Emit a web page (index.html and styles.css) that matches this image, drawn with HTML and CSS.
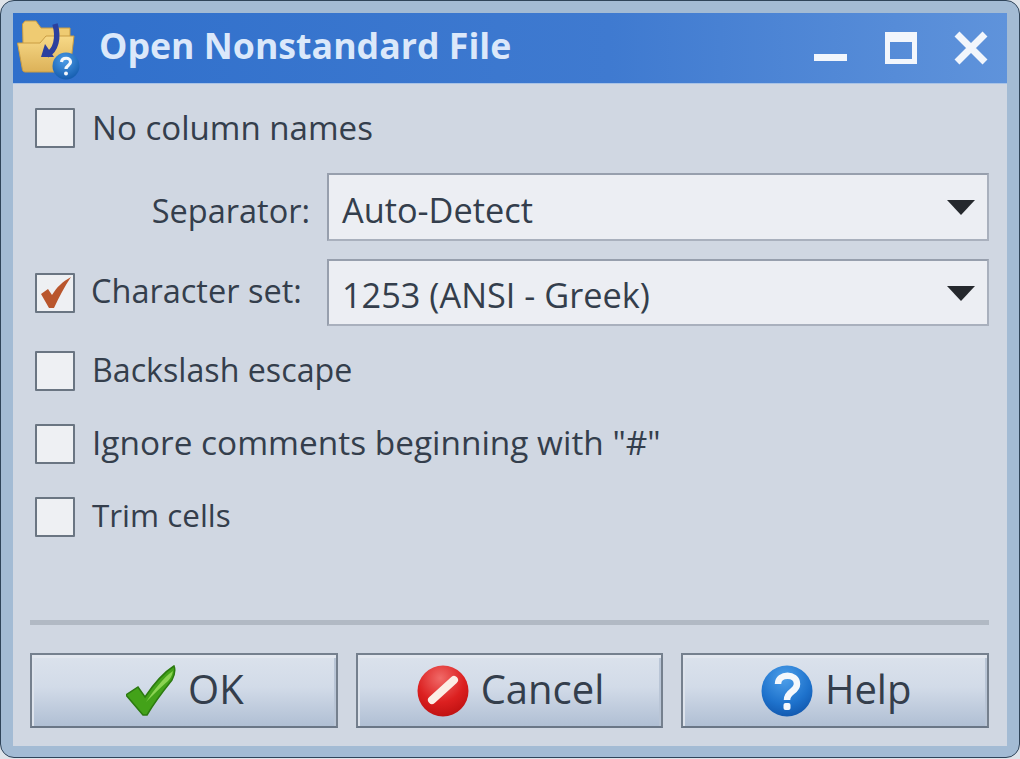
FILE: index.html
```html
<!DOCTYPE html>
<html lang="en">
<head>
<meta charset="utf-8">
<title>Open Nonstandard File</title>
<link rel="stylesheet" href="styles.css">
</head>
<body>
<div class="window">
  <header class="titlebar">
    <svg class="app-icon" width="68" height="68" viewBox="0 0 68 68">
      <defs>
        <linearGradient id="fold" x1="0" y1="0" x2="0" y2="1"><stop offset="0" stop-color="#f7d987"/><stop offset="1" stop-color="#dcb158"/></linearGradient>
        <radialGradient id="qsm" cx=".45" cy=".3" r=".8"><stop offset="0" stop-color="#4b9be6"/><stop offset="1" stop-color="#0f55a8"/></radialGradient>
      </defs>
      <path d="M5.500 8 L8 5 H19 L24 12 H53 V28 H6Z" fill="#efcb72" stroke="#c99c42"/>
      <path d="M0.500 27 H23 L29 20 H57 L53 54 Q52.500 56 50 56 H8 Q6 56 5.500 54Z" fill="url(#fold)" stroke="#c99c42"/>
      <path d="M38 8 C42 22 39 34 30 39" fill="none" stroke="#2b3f9e" stroke-width="5.500"/>
      <path d="M24 41 L28 28 L37 41Z" fill="#2b3f9e"/>
      <circle cx="49" cy="50" r="13.500" fill="url(#qsm)"/>
      <path d="M44.500 46 C45 41 53.500 41 53.500 46 C53.500 49.500 49 49.500 49 53" fill="none" stroke="#f5f8fc" stroke-width="3.200"/>
      <circle cx="49" cy="57.500" r="2" fill="#f5f8fc"/>
    </svg>
    <h1 class="title">Open Nonstandard File</h1>
    <div class="controls">
      <svg width="34" height="34" viewBox="0 0 34 34"><rect x="0" y="23" width="33" height="7" fill="#f2f6fc"/></svg>
      <svg width="34" height="34" viewBox="0 0 34 34"><path fill="#f2f6fc" fill-rule="evenodd" d="M1 1H33V33H1ZM6 11V28H28V11Z"/></svg>
      <svg width="34" height="34" viewBox="0 0 34 34"><path stroke="#f2f6fc" stroke-width="7" d="M3 3L31 31M31 3L3 31"/></svg>
    </div>
  </header>
  <main class="content">
    <div class="row row-first">
      <span class="check"></span><span class="label size-a">No column names</span>
    </div>
    <div class="row row-sep">
      <span class="field-label">Separator:</span>
      <div class="combo"><span>Auto-Detect</span><i class="arrow"></i></div>
    </div>
    <div class="row row-charset">
      <span class="check">
        <svg width="34" height="34" viewBox="0 0 34 34"><path d="M3 18 L10 13 L14 19 C19 11 24 6 33 1 C27 10 21 21 16 32 L11 32Z" fill="#b9562d"/></svg>
      </span>
      <span class="charset-label">Character set:</span>
      <div class="combo"><span>1253 (ANSI - Greek)</span><i class="arrow"></i></div>
    </div>
    <div class="row row-a"><span class="check"></span><span class="label size-b">Backslash escape</span></div>
    <div class="row row-b"><span class="check"></span><span class="label size-c">Ignore comments beginning with "#"</span></div>
    <div class="row row-c"><span class="check"></span><span class="label size-d">Trim cells</span></div>
    <div class="spacer"></div>
    <hr class="divider">
    <div class="buttons">
      <button class="btn" type="button">
        <svg width="50" height="52" viewBox="2 0 50 52"><path d="M2 30 L14 22 L21 32 C29 20 39 8 50 1 C52 6 50 11 48 15 C40 25 30 38 23 50 L19 50Z" fill="#43a219" stroke="#2c7a10" stroke-width="1.500"/><path d="M22 37 C30 25 39 13 49 6 C48 11 46 14 44 16 C36 23 29 30 22 37Z" fill="#8bd352"/></svg>
        <span>OK</span>
      </button>
      <button class="btn" type="button">
        <svg width="52" height="52" viewBox="0 0 52 52"><defs><radialGradient id="red" cx=".45" cy=".25" r=".85"><stop offset="0" stop-color="#f06a68"/><stop offset=".55" stop-color="#dc2020"/><stop offset="1" stop-color="#b70d0d"/></radialGradient></defs><circle cx="26" cy="26" r="25.500" fill="url(#red)"/><path d="M15 35 L37 15" stroke="#fbeee6" stroke-width="8" stroke-linecap="round"/></svg>
        <span>Cancel</span>
      </button>
      <button class="btn" type="button">
        <svg width="52" height="52" viewBox="0 0 52 52"><defs><radialGradient id="blue" cx=".45" cy=".25" r=".85"><stop offset="0" stop-color="#4ea0ea"/><stop offset=".6" stop-color="#1e72cc"/><stop offset="1" stop-color="#0e50a5"/></radialGradient></defs><circle cx="26" cy="26" r="25.500" fill="url(#blue)"/><path d="M17 19 C17 8 36 8 36 19 C36 27 26 26 26 35" fill="none" stroke="#f5f8fc" stroke-width="6.500"/><rect x="22.500" y="38" width="7" height="7" rx="2" fill="#f5f8fc"/></svg>
        <span>Help</span>
      </button>
    </div>
  </main>
</div>
</body>
</html>
```
FILE: styles.css
```css
* { box-sizing: border-box; }
html, body { margin: 0; padding: 0; height: 100%; background: #dfe4ea; }
body { font-family: "Open Sans", "Noto Sans", sans-serif; color: #343e4c; overflow: hidden; }
.window {
  width: 1020px; height: 758px;
  padding: 12px 12px 11px 12px;
  display: flex; flex-direction: column;
  background: #a3bbd4;
  border: 1.5px solid #2f4459;
  border-radius: 14px;
}
.titlebar {
  flex: none; height: 71px;
  display: flex; align-items: center;
  background: linear-gradient(90deg, #2f6fcb 0%, #3f7ad0 60%, #5f93db 100%);
  border-bottom: 1px solid #a9c3e6;
  position: relative;
}
.app-icon { position: absolute; left: 4px; top: 3px; }
.title {
  margin: 0 0 4px 86px;
  font-size: 35.700px; font-weight: 700; color: #dbe8fa; line-height: 1;
  white-space: nowrap;
}
.controls { margin-left: auto; margin-right: 19px; display: flex; align-items: center; gap: 36px; }
.content {
  flex: 1; display: flex; flex-direction: column;
  padding: 24px 18px 18px 17px;
  background: #d0d7e2;
}
.row { display: flex; align-items: center; font-size: 32.500px; white-space: nowrap; }
.row-first { padding-left: 5px; height: 40px; }
.row-sep { margin-top: 25px; height: 68px; }
.row-charset { margin-top: 18px; height: 67px; padding-left: 5px; }
.row-a { margin-top: 25px; height: 40px; padding-left: 5px; }
.row-b { margin-top: 33px; height: 40px; padding-left: 5px; }
.row-c { margin-top: 33px; height: 40px; padding-left: 5px; }
.check {
  flex: none; width: 40px; height: 40px;
  display: flex; align-items: center; justify-content: center;
  background: #eef0f3; border: 2px solid #6a7582; border-radius: 1px;
}
.label { margin-left: 17px; padding-bottom: 5px; }
.size-a { font-size: 33.100px; padding-bottom: 2px; }
.size-b { font-size: 32.200px; padding-bottom: 3px; }
.size-c { font-size: 33.400px; }
.size-d { font-size: 31.400px; }
.field-label { width: 280px; text-align: right; flex: none; padding-top: 6px; }
.charset-label { width: 219px; flex: none; margin-left: 16px; padding-bottom: 4px; }
.combo {
  flex: 1; height: 100%; margin-left: 17px;
  display: flex; align-items: center; justify-content: space-between;
  padding: 4px 13px 0 13px;
  font-size: 34.300px;
  background: #eceef3;
  border: 2px solid #a9b0bd; border-top-color: #979fad; border-left-color: #979fad;
}
.arrow {
  width: 0; height: 0; margin-bottom: 3px; margin-right: -1px;
  border-left: 14px solid transparent; border-right: 14px solid transparent;
  border-top: 15px solid #25282d;
}
.spacer { flex: 1; }
.divider { width: 100%; height: 5px; margin: 0 0 28px; border: 0; background: #b1b9c4; }
.buttons { flex: none; display: grid; grid-template-columns: repeat(3, 1fr); gap: 18px; }
.btn {
  height: 75px; display: flex; align-items: center; justify-content: center; gap: 12px;
  font: inherit; font-size: 40px; color: #343e4c;
  background: linear-gradient(180deg, #dbe2ec 0%, #d2dbe8 45%, #b0bfd4 100%);
  border: 2px solid #75808e; border-bottom-color: #6a7686;
  box-shadow: inset 0 3px 0 #e2e7ef, inset 2px 0 0 #dde3ec, inset -2px 0 0 #b9c5d6;
  padding: 0 0 0 2px;
}
.btn span { padding-bottom: 5px; }
```
